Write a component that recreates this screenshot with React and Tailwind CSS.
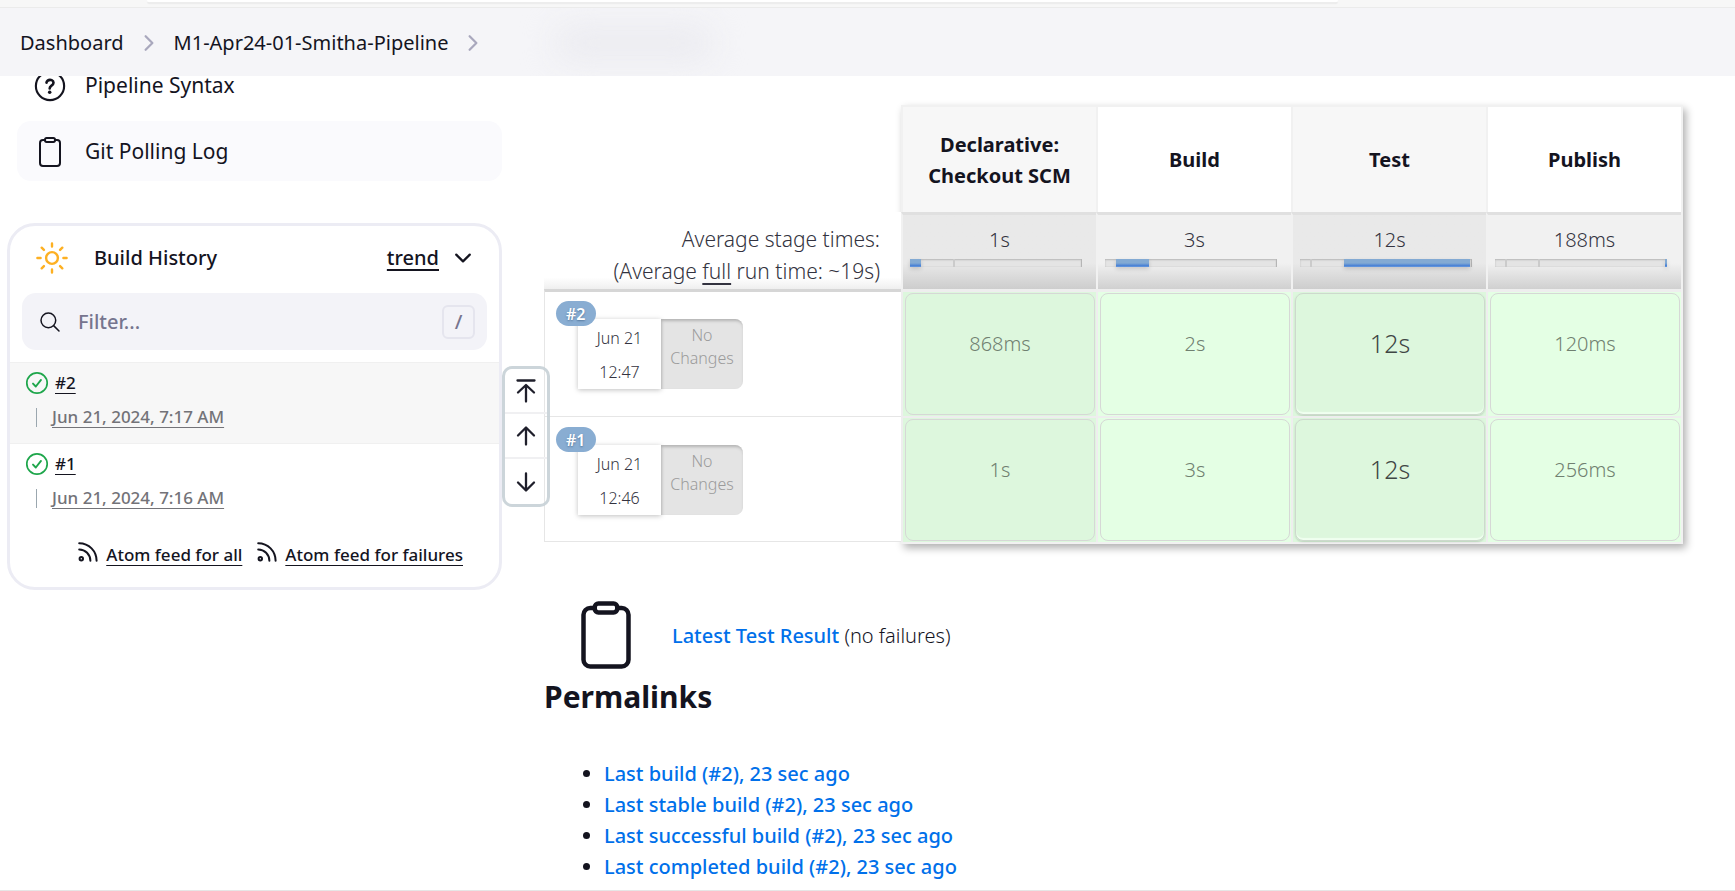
import React from "react";
import {
  IoChevronDown,
  IoChevronForward,
  IoClipboardOutline,
  IoSearchOutline,
} from "react-icons/io5";

const stages = [
  { name: "Declarative: Checkout SCM", average: "1s", start: 0, width: 6.5, ticks: [25], shaded: true },
  { name: "Build", average: "3s", start: 6.5, width: 19, ticks: [], shaded: false },
  { name: "Test", average: "12s", start: 25.5, width: 73.5, ticks: [6], shaded: true },
  { name: "Publish", average: "188ms", start: 99, width: 1, ticks: [6, 25], shaded: false },
];

const runs = [
  { id: "#2", day: "Jun 21", time: "12:47", date: "Jun 21, 2024, 7:17 AM", durations: ["868ms", "2s", "12s", "120ms"] },
  { id: "#1", day: "Jun 21", time: "12:46", date: "Jun 21, 2024, 7:16 AM", durations: ["1s", "3s", "12s", "256ms"] },
];

const permalinks = [
  "Last build (#2), 23 sec ago",
  "Last stable build (#2), 23 sec ago",
  "Last successful build (#2), 23 sec ago",
  "Last completed build (#2), 23 sec ago",
];

function HelpIcon() {
  return (
    <svg viewBox="0 0 512 512" className="size-8" fill="none" stroke="currentColor" strokeLinecap="round" aria-hidden="true">
      <circle cx="256" cy="256" r="226" strokeWidth="34" />
      <path
        d="M200 202.29s.84-17.5 19.57-32.57C230.68 160.77 244 158.18 256 158c10.93-.14 20.69 1.67 26.53 4.45 10 4.76 29.47 16.38 29.47 41.09 0 26-17 37.81-36.37 50.8S251 281.43 251 296"
        strokeWidth="42"
      />
      <circle cx="251" cy="356" r="28" fill="currentColor" stroke="none" />
    </svg>
  );
}

function SunIcon() {
  return (
    <svg viewBox="0 0 32 32" className="size-8 text-[#fdb022]" fill="none" stroke="currentColor" strokeWidth="2.4" strokeLinecap="round" aria-hidden="true">
      <circle cx="16" cy="16" r="5.9" />
      <path d="M16 1.400v3.200M16 27.400v3.200M1.400 16h3.200M27.400 16h3.200M5.700 5.700l2.200 2.200M24.100 24.100l2.200 2.200M5.700 26.300l2.200-2.200M24.100 7.900l2.200-2.200" />
    </svg>
  );
}

function SuccessIcon() {
  return (
    <svg viewBox="0 0 24 24" className="size-6 shrink-0 text-[#1ea64b]" fill="none" stroke="currentColor" strokeLinecap="round" strokeLinejoin="round" aria-hidden="true">
      <circle cx="12" cy="12" r="10.2" strokeWidth="1.7" />
      <path d="M8 12.600l2.800 2.900 5.200-6.600" strokeWidth="1.9" />
    </svg>
  );
}

function FeedIcon() {
  return (
    <svg viewBox="0 0 20 20" className="size-5 shrink-0" fill="none" stroke="currentColor" strokeWidth="2" strokeLinecap="round" aria-hidden="true">
      <path d="M1.200 1.200C11 1.200 18.600 9.200 18.600 18.800M1.200 7.400C7.400 7.400 12.400 12.600 12.400 18.800" />
      <circle cx="3.300" cy="16.800" r="1.700" />
    </svg>
  );
}

const arrowPaths = {
  top: "M3.500 1.500h17M12 22.500V6.500M4 13.500l8-7.500 8 7.500",
  up: "M12 20.500V4M4 11.500L12 3.500l8 8",
  down: "M12 3.500V20M4 12.500l8 8 8-8",
};

function ArrowIcon({ kind }) {
  return (
    <svg viewBox="0 0 24 24" className="size-6" fill="none" stroke="currentColor" strokeWidth="2.3" strokeLinecap="round" strokeLinejoin="round" aria-hidden="true">
      <path d={arrowPaths[kind]} />
    </svg>
  );
}

function Breadcrumbs() {
  return (
    <header className="relative z-10">
      <div className="h-2 border-b border-[#ebebeb] bg-[#f7f7f7] pl-[8.5%]">
        <div className="h-[2px] w-[75%] rounded-b-sm bg-white shadow-[0_2px_1px_#ebebeb]" />
      </div>
      <nav aria-label="Breadcrumb" className="h-[68px] overflow-hidden bg-[#f5f5f8]">
        <ol className="flex h-full items-center pl-5 pt-[2px] text-[20px]">
          <li><a href="#dashboard">Dashboard</a></li>
          <li className="flex w-[50px] justify-center text-[#a9a8bd]"><IoChevronForward className="size-6" /></li>
          <li><a href="#pipeline">M1-Apr24-01-Smitha-Pipeline</a></li>
          <li className="flex w-[50px] justify-center text-[#a9a8bd]"><IoChevronForward className="size-6" /></li>
          <li aria-hidden="true" className="ml-14 h-9 w-[160px] rounded-full bg-[#ebebf0] blur-lg" />
        </ol>
      </nav>
    </header>
  );
}

function BuildHistory() {
  return (
    <section className="mt-[42px] ml-[7px] h-[367px] rounded-[28px] border-[3px] border-[#ececf4] bg-white">
      <div className="flex h-[67px] items-center pb-1 pl-[26px] pr-6">
        <SunIcon />
        <h2 className="ml-[26px] text-[20px] font-medium">Build History</h2>
        <a href="#trend" className="ml-auto text-[20px] font-medium underline decoration-2 underline-offset-4">trend</a>
        <button type="button" aria-label="Collapse" className="ml-3"><IoChevronDown className="size-6" /></button>
      </div>
      <div className="mx-3 flex h-[57px] items-center rounded-[14px] bg-[#f3f3f8] pl-4 pr-3">
        <IoSearchOutline className="size-6 shrink-0" />
        <input
          type="text"
          aria-label="Filter builds"
          placeholder="Filter..."
          className="ml-4 min-w-0 flex-1 bg-transparent text-[20px] font-medium outline-none placeholder:text-[#76758f]"
        />
        <kbd className="flex h-[34px] w-[33px] items-center justify-center rounded-md border-2 border-[#e5e5ee] font-[Noto_Sans,sans-serif] text-[20px] text-[#76758f]">/</kbd>
      </div>
      <ul className="mt-3">
        {runs.map((run, index) => (
          <li
            key={run.id}
            className={
              index === 0
                ? "h-[82px] border-y border-[#f0f0f0] bg-[#f7f7f7] pl-[15px] pt-[6px]"
                : "h-[82px] pl-[15px] pt-[6px]"
            }
          >
            <div className="flex h-7 items-center gap-[6px]">
              <SuccessIcon />
              <a href="#run" className="text-[17px] underline underline-offset-4">{run.id}</a>
            </div>
            <div className="mt-1 flex h-8 items-center pl-[11px]">
              <span className="mr-[15px] h-[19px] w-px bg-[#9ba7af]" />
              <a href="#run" className="text-[17px] text-[#737378] underline underline-offset-4">{run.date}</a>
            </div>
          </li>
        ))}
      </ul>
      <div className="mt-4 flex items-start justify-end pr-9 text-[17px]">
        <FeedIcon />
        <a href="#all" className="ml-2 underline underline-offset-4">Atom feed for all</a>
        <span className="ml-[15px] flex"><FeedIcon /></span>
        <a href="#failures" className="ml-2 underline underline-offset-4">Atom feed for failures</a>
      </div>
    </section>
  );
}

function Pager() {
  return (
    <div className="absolute left-full top-[290px] z-10 flex w-12 flex-col divide-y-2 divide-[#f0f0f2] rounded-[10px] border-[3px] border-[#c6d0d6]/90 text-[#1f1f2b]">
      <button type="button" aria-label="Newest builds" className="flex h-[45px] items-center justify-center"><ArrowIcon kind="top" /></button>
      <button type="button" aria-label="Newer builds" className="flex h-[45px] items-center justify-center"><ArrowIcon kind="up" /></button>
      <button type="button" aria-label="Older builds" className="flex h-[45px] items-center justify-center"><ArrowIcon kind="down" /></button>
    </div>
  );
}

function Sidebar() {
  return (
    <aside className="relative w-[502px] shrink-0 font-medium">
      <nav className="-mt-[21px] pl-[17px] text-[21px] font-normal">
        <a href="#syntax" className="flex h-[60px] items-center gap-[19px] pl-[17px] pt-[2px]"><HelpIcon />Pipeline Syntax</a>
        <a href="#polling" className="mt-[6px] flex h-[60px] items-center gap-[19px] rounded-[14px] bg-[#fafafd] pl-[17px] pt-[2px]">
          <IoClipboardOutline className="size-8" />Git Polling Log
        </a>
      </nav>
      <BuildHistory />
      <Pager />
    </aside>
  );
}

function StageBar({ stage }) {
  return (
    <div className="relative mt-1 h-2 w-[172px] bg-[#e4e4e4] shadow-[inset_0_1px_2px_#b8b8b8,inset_-1px_0_1px_#b0b0b0]">
      {stage.ticks.map((tick) => (
        <div key={tick} className="absolute inset-y-0 w-[2px] bg-[#cbcbcb]" style={{ left: `${tick}%` }} />
      ))}
      <div
        className="absolute inset-y-0 bg-linear-to-b from-[#83aad3] from-50% via-[#467fd5] via-85% to-[#6f9fe0] shadow-[0_2px_4px_#00000026]"
        style={{ left: `${stage.start}%`, width: `${stage.width}%` }}
      />
    </div>
  );
}

function RunSummary({ run }) {
  return (
    <div className="flex pl-[11px] pt-[9px]">
      <div className="relative pl-[22px] pt-[18px]">
        <a href="#run" className="absolute left-0 top-0 flex h-[25px] items-center rounded-full bg-[#89add2] px-[10px] text-[16px] font-semibold text-white [text-shadow:0_1px_2px_#55779c]">
          {run.id}
        </a>
        <div className="flex h-[70px] text-center text-[16px]">
          <div className="w-[83px] bg-white pt-[2px] leading-[34px] shadow-[0_1px_5px_#00000040]">
            {run.day}
            <br />
            {run.time}
          </div>
          <div className="relative w-[82px] rounded-r-lg bg-[#e4e4e4] pt-[5px] leading-[23px] text-[#9b9b9b] shadow-[inset_1px_2px_3px_#b4b4b4]">
            No
            <br />
            Changes
          </div>
        </div>
      </div>
    </div>
  );
}

function StageCell({ stage, duration, first }) {
  const longest = stage.name === "Test";
  return (
    <td
      className={
        "border-l-2 border-[#eeeeee] p-[1px] pl-[2px] " +
        (first ? "border-t-[3px] " : "border-t-2 ") +
        (stage.shaded ? "bg-[#ddf7dd]" : "bg-[#e4ffe4]")
      }
    >
      <div
        className={
          "flex h-[122px] items-center justify-center rounded-lg border pb-5 " +
          (longest
            ? "border-[#cdd9cd] text-[25px] text-[#3f4644] shadow-[0_1px_2px_#00000026,inset_0_-2px_1px_#f0fff0]"
            : "border-[#d6d8d6] text-[20px] text-[#708070]")
        }
      >
        {duration}
      </div>
    </td>
  );
}

function StageView() {
  return (
    <div className="relative pr-[2px]">
      <div className="pointer-events-none absolute inset-y-0 left-[357px] right-0 border-2 border-[#f1f1f1] bg-[#eeeeee] shadow-[3px_4px_8px_#00000050]" />
      <table className="relative w-full table-fixed border-separate border-spacing-0 text-[#333340]">
        <colgroup>
          <col className="w-[357px]" />
          <col />
          <col />
          <col />
          <col />
        </colgroup>
        <thead>
          <tr>
            <td />
            {stages.map((stage) => (
              <th
                key={stage.name}
                scope="col"
                className={
                  "h-[107px] border-l-2 border-t-2 border-[#f1f1f1] px-5 text-[20px] font-bold leading-[31px] text-[#14141f] " +
                  (stage.shaded ? "bg-[#f7f7f7]" : "bg-white")
                }
              >
                {stage.name}
              </th>
            ))}
          </tr>
          <tr className="font-light">
            <td className="bg-linear-to-b from-white from-85% to-[#efefef] pr-[21px] pt-[11px] text-right align-top text-[21px] leading-8">
              Average stage times:
              <br />
              (Average <span className="underline decoration-2 underline-offset-4">full</span> run time: ~19s)
            </td>
            {stages.map((stage) => (
              <td
                key={stage.name}
                className={
                  "h-[77px] border-l-2 border-t-[3px] border-l-[#f1f1f1] border-t-[#e0e0e0] bg-linear-to-b px-[7px] pt-[9px] text-center align-top text-[20px] leading-[31px] " +
                  (stage.shaded
                    ? "from-[#e9e9e9] from-65% to-[#cdcdcd]"
                    : "from-[#f1f1f1] from-65% to-[#d0d0d0]")
                }
              >
                {stage.average}
                <StageBar stage={stage} />
              </td>
            ))}
          </tr>
        </thead>
        <tbody className="font-light">
          {runs.map((run, index) => (
            <tr key={run.id}>
              <td
                className={
                  "border-l border-[#e6e6e6] bg-white p-0 align-top " +
                  (index === 0 ? "border-t-[3px] border-t-[#d6d6d6]" : "border-y pt-[1px]")
                }
              >
                <RunSummary run={run} />
              </td>
              {stages.map((stage, column) => (
                <StageCell key={stage.name} stage={stage} duration={run.durations[column]} first={index === 0} />
              ))}
            </tr>
          ))}
        </tbody>
      </table>
      <div className="h-[2px]" />
    </div>
  );
}

export default function App() {
  return (
    <div className="flex h-screen flex-col overflow-hidden border-b border-[#e6e6e6] bg-white font-[Noto_Sans,Open_Sans,sans-serif] text-[#14141f]">
      <Breadcrumbs />
      <div className="flex">
        <Sidebar />
        <main className="min-w-0 flex-1 pl-[42px] pr-[52px] pt-[29px]">
          <StageView />
          <div className="mt-[55px] flex items-center pl-[26px]">
            <IoClipboardOutline className="size-[72px]" />
            <p className="ml-[30px] pt-[2px] text-[20px]">
              <a href="#tests" className="font-medium text-[#0070ea]">Latest Test Result</a>{" "}
              <span className="font-light">(no failures)</span>
            </p>
          </div>
          <h2 className="mt-1 text-[30px] font-bold leading-[44px]">Permalinks</h2>
          <ul className="mt-[39px] list-disc pl-[60px] text-[20px] font-medium leading-[31px]">
            {permalinks.map((label) => (
              <li key={label}>
                <a href="#permalink" className="text-[#0070ea]">{label}</a>
              </li>
            ))}
          </ul>
        </main>
      </div>
    </div>
  );
}
